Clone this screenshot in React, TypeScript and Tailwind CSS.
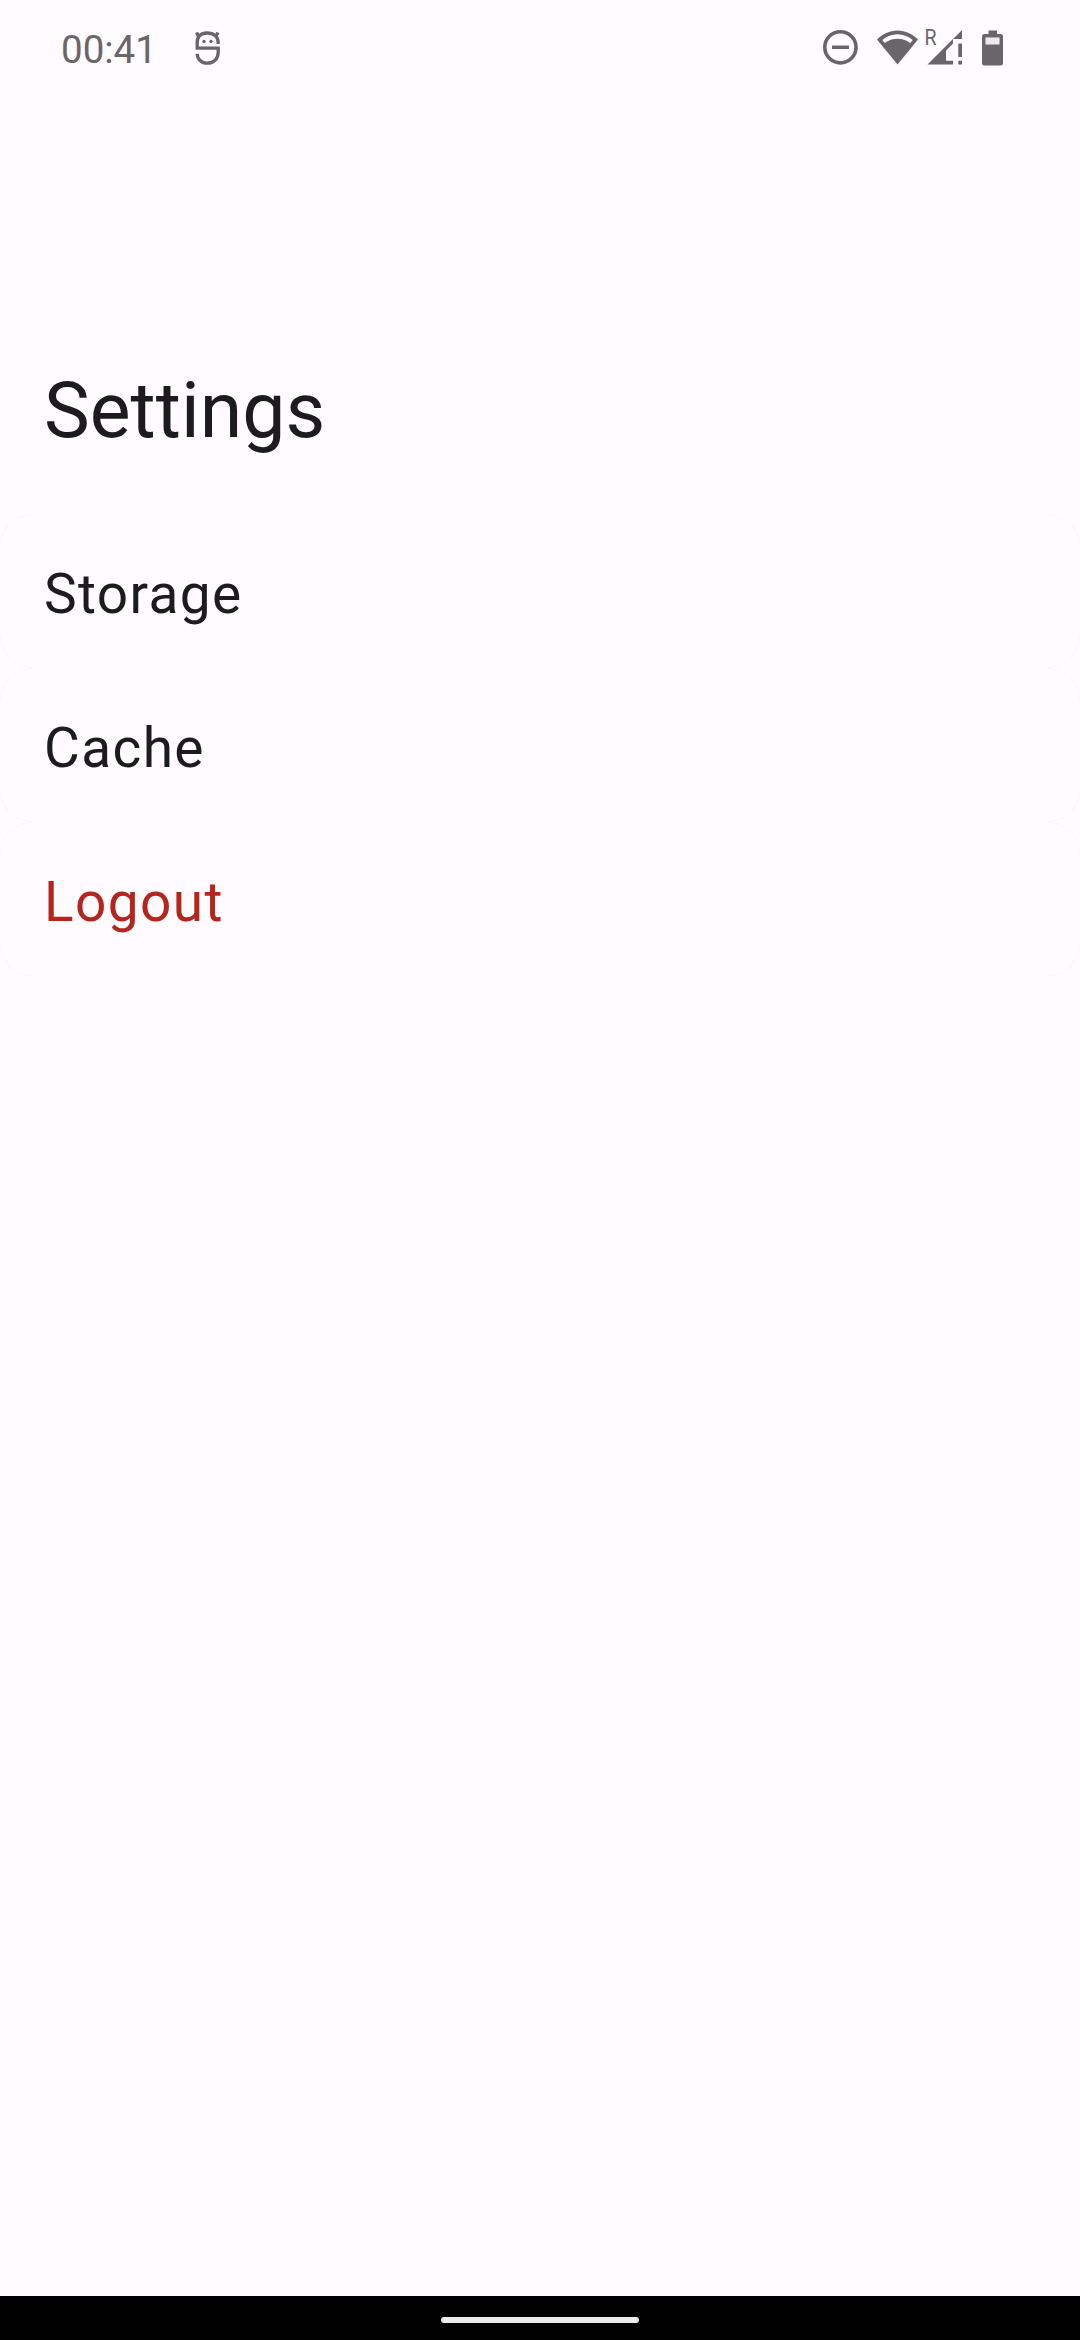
const rows = [
  { label: "Storage", color: "text-[#1c1b1f]" },
  { label: "Cache", color: "text-[#1c1b1f]" },
  { label: "Logout", color: "text-[#b3261e]" },
];

function StatusBar() {
  return (
    <header className="flex h-[94px] shrink-0 items-start justify-between pr-[76px] pl-[61px] text-[#69666a]">
      <div className="flex">
        <span className="w-[132px] pt-[27px] text-[38.5px] leading-[45px] whitespace-nowrap">00:41</span>
        <svg className="mt-[30px] h-9 w-[28px]" viewBox="0 0 28 36" fill="none" stroke="currentColor" strokeWidth="3.3">
          <path d="M25.2 14V12.5C25.2 6.5 20.5 3 14 3S4.2 6.5 4.2 12.5V18.2H25.2V22.5C25.2 29 20.5 33.2 14.5 33.2S4.2 29 4.2 23.8" />
          <path d="M5.5 6.3 3.6 2.4M23 6.3 25 2.4" />
          <circle cx="11" cy="11.5" r="1.7" fill="currentColor" stroke="none" />
          <circle cx="18" cy="11.5" r="1.7" fill="currentColor" stroke="none" />
        </svg>
      </div>
      <svg className="mt-[16px] h-[60px] w-[181px]" viewBox="823 16 181 60" fill="currentColor">
        <circle cx="840.4" cy="47.3" r="15.6" fill="none" stroke="currentColor" strokeWidth="3.6" />
        <path d="M832 45.5H849V49H832Z" />
        <path fillRule="evenodd" d="M897.5 30.5C905.5 30.5 912.5 34 918 39.5L897.5 64.5 877 39.5C882.5 34 889.5 30.5 897.5 30.5ZM882.3 40L884.7 43C888.5 40.300 893 38.800 897.5 38.800S906.5 40.300 910.3 43L912.7 40C908.3 36.300 903 34.200 897.5 34.200S886.7 36.300 882.3 40Z" />
        <text x="924.5" y="44.5" fontSize="21.5" fontFamily="Roboto, sans-serif" textLength="12" lengthAdjust="spacingAndGlyphs">R</text>
        <path d="M927.5 64.5 953 39V43.500L946 50.500V60.700H953V64.500H927.500ZM953 39 962 30V39ZM958.300 43.500H962V57H958.300ZM958.300 60.700H962V64.500H958.300Z" />
        <path fillRule="evenodd" d="M988.500 30.500H997V34H1000.500Q1003 34 1003 36.500V63Q1003 65.500 1000.500 65.500H984.500Q982 65.500 982 63V36.500Q982 34 984.500 34H988.500ZM985.500 37.500V44.500H999.500V37.500Z" />
        <path opacity="0.12" d="M985.500 37.500H999.500V44.500H985.500Z" />
      </svg>
    </header>
  );
}

export default function App() {
  return (
    <div className="flex h-[2340px] w-[1080px] flex-col overflow-hidden bg-[#fffbff] font-['Roboto',sans-serif]">
      <StatusBar />
      <main className="flex grow flex-col">
        <h1 className="mt-[267px] mb-[53px] px-[44px] text-[77px] leading-[100px] font-normal text-[#1c1b1f]">Settings</h1>
        <ul>
          {rows.map(({ label, color }) => (
            <li key={label} className="relative flex h-[154px] items-center px-[44px] pt-[6px]">
              <span className="absolute top-0 left-0 size-8 rounded-tl-[32px] border-t border-l border-[#fbf5f8]" />
              <span className="absolute top-0 right-0 size-8 rounded-tr-[32px] border-t border-r border-[#fbf5f8]" />
              <span className="absolute bottom-0 left-0 size-8 rounded-bl-[32px] border-b border-l border-[#fbf5f8]" />
              <span className="absolute right-0 bottom-0 size-8 rounded-br-[32px] border-r border-b border-[#fbf5f8]" />
              <span className={`text-[55px] leading-[77px] tracking-[1.375px] ${color}`}>{label}</span>
            </li>
          ))}
        </ul>
      </main>
      <footer className="flex h-[44px] shrink-0 items-start justify-center bg-black pt-[21px]">
        <div className="h-[6px] w-[198px] rounded-full bg-[#ebebeb]" />
      </footer>
    </div>
  );
}
